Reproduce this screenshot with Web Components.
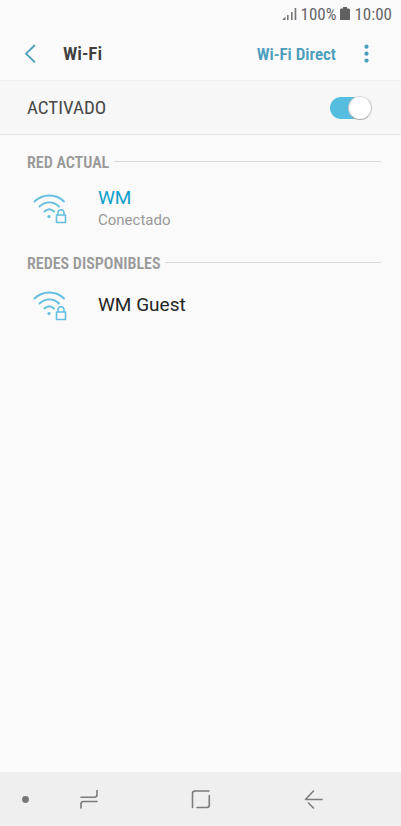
<!DOCTYPE html>
<html lang="es">
<head>
<meta charset="utf-8">
<meta name="viewport" content="width=device-width, initial-scale=1">
<title>Wi-Fi</title>
<style>
html, body { margin: 0; background: #fafafa; }
body { font-family: Roboto, "Liberation Sans", sans-serif; color: #252525;
  --condensed: "Roboto Condensed", Roboto, "Liberation Sans", sans-serif; --accent: #4a9dbd; }
</style>
</head>
<body>
<wifi-screen></wifi-screen>
<script>
function define(name, html) {
  const template = document.createElement('template');
  template.innerHTML = html;
  customElements.define(name, class extends HTMLElement {
    constructor() {
      super();
      this.attachShadow({ mode: 'open' }).append(template.content.cloneNode(true));
    }
  });
}

define('status-bar', `
<style>
:host { display: flex; justify-content: flex-end; align-items: center; height: 28px; padding: 0 9px; gap: 4px;
  font: 400 17px/20px var(--condensed); color: #666; }
svg { display: block; }
</style>
<svg width="15" height="14" viewBox="0 0 15 14" fill="#777" aria-hidden="true"><path d="M0 13l3.500-3.500v3.500zM5 8h1.600v5H5zM9 5h1.600v8H9zM12.600 1h1.700v12h-1.700z"/></svg>
<span>100%</span>
<svg width="10" height="14" viewBox="0 0 10 14" fill="#606060" aria-hidden="true"><path d="M3 0h4v1.500h1.600q1.400 0 1.400 1.400V13H0V2.900q0-1.400 1.400-1.400H3z"/></svg>
<time>10:00</time>`);

define('app-header', `
<style>
:host { display: flex; align-items: center; height: 52px; padding: 0 23px 0 18px; box-sizing: border-box; }
button { border: 0; padding: 0; background: none; font: 600 17px/24px var(--condensed); color: var(--accent); }
svg { display: block; }
h1 { flex: 1; margin: 0 0 0 21px; font: 600 19px/24px var(--condensed); color: #404040; }
.more { margin-left: 18px; }
</style>
<button aria-label="Atrás"><svg width="24" height="24" viewBox="0 0 24 24" fill="none" stroke="#4a9dbd" stroke-width="1.800"><path d="M17 3L8 11.700l9 8.700"/></svg></button>
<h1><slot></slot></h1>
<button>Wi-Fi Direct</button>
<button class="more" aria-label="Más opciones"><svg width="24" height="24" viewBox="0 0 24 24" fill="#4a9dbd"><circle cx="12.500" cy="4.700" r="2.100"/><circle cx="12.500" cy="11.700" r="2.100"/><circle cx="12.500" cy="18.600" r="2.100"/></svg></button>`);

define('switch-row', `
<style>
:host { display: block; background: #f7f7f7; border-top: 1px solid #f0f0f0; border-bottom: 1px solid #e4e4e4; }
label { display: flex; align-items: center; justify-content: space-between; height: 53px; padding: 0 29px 0 27px;
  font: 400 19px/24px var(--condensed); color: #484848; }
input { appearance: none; margin: 0; width: 42px; height: 24px; display: flex; align-items: center; }
input::before { content: ""; flex: 1; height: 22px; margin-right: -12px; background: #56bde0; border-radius: 11px 0 0 11px; }
input::after { content: ""; box-sizing: border-box; width: 24px; height: 24px; border-radius: 50%; background: #fff;
  border: 1px solid #c4c4c4; border-top-color: #d6d6d6; border-bottom-color: #aaa; }
</style>
<label><slot></slot><input type="checkbox" role="switch" checked></label>`);

define('section-title', `
<style>
:host { display: flex; align-items: center; gap: 5px; padding: 0 20px 0 27px; }
h2 { margin: 0; font: 600 16px/20px var(--condensed); color: #999; }
i { flex: 1; height: 1px; background: #d9d9d9; margin-bottom: 4px; }
</style>
<h2><slot></slot></h2><i></i>`);

define('wifi-network', `
<style>
:host { display: block; }
button { display: flex; align-items: center; width: 100%; border: 0; padding: 0 20px 0 31px; background: none; color: #252525; text-align: left; font: 400 19px/24px Roboto, "Liberation Sans", sans-serif; }
svg { display: block; margin-right: 29px; }
span { display: block; }
:host([current]) .name { color: #0d9fcd; }
::slotted([slot=state]) { display: block; font-size: 15px; line-height: 20px; color: #999; }
</style>
<button>
<svg width="38" height="36" viewBox="0 0 38 36" fill="none" stroke="#62bfe0" stroke-width="1.900" stroke-linecap="round" aria-hidden="true">
<path d="M3.500 11.500C12 3.500 25 3.500 33 11.500M8.500 16.500c6-5.500 14-5.500 19.500 0M13.500 21.500c3-2.800 6.500-2.800 9.500 0"/>
<circle cx="18" cy="26.500" r="1.600" fill="#62bfe0" stroke="none"/>
<path d="M25.500 25h9v7.500h-9zM27 25v-2.200a3 3 0 0 1 6 0v2.200" stroke-width="1.600" stroke-linejoin="round"/>
</svg>
<span><span class="name"><slot></slot></span><slot name="state"></slot></span>
</button>`);

define('nav-bar', `
<style>
:host { display: grid; grid-template-columns: 15px 1fr 1fr 1fr; align-items: center; height: 54px; padding: 0 32px 0 18px; background: #efefef; }
button { border: 0; padding: 0; background: none; display: flex; justify-content: center; }
svg { display: block; fill: none; stroke: #7c7c7c; stroke-width: 1.600; stroke-linecap: round; stroke-linejoin: round; }
</style>
<button aria-label="Mostrar u ocultar barra"><svg width="15" height="22" viewBox="0 0 15 22"><circle cx="7.500" cy="11.500" r="3.400" style="fill:#777;stroke:none"/></svg></button>
<button aria-label="Recientes"><svg width="22" height="22" viewBox="0 0 22 22"><path d="M3 9.300h13.500q2.500 0 2.500-2.500V2.500M19 13.500H5.500Q3 13.500 3 16v4"/></svg></button>
<button aria-label="Inicio"><svg width="22" height="22" viewBox="0 0 22 22"><path d="M19 3H5Q2.500 3 2.500 5.500V19.500M19.300 7.500V17Q19.300 19.500 16.800 19.500H7"/></svg></button>
<button aria-label="Volver"><svg width="22" height="22" viewBox="0 0 22 22"><path d="M20 11.500H3.500L11.500 3M6.500 15l5 5"/></svg></button>`);

define('wifi-screen', `
<style>
:host { display: flex; flex-direction: column; min-height: 100vh; }
main { flex: 1; }
section { padding-top: 18px; }
section + section { padding-top: 24px; }
wifi-network { margin-top: 13px; }
</style>
<status-bar></status-bar>
<app-header>Wi-Fi</app-header>
<main>
<switch-row>ACTIVADO</switch-row>
<section><section-title>RED ACTUAL</section-title><wifi-network current>WM<span slot="state">Conectado</span></wifi-network></section>
<section><section-title>REDES DISPONIBLES</section-title><wifi-network>WM Guest</wifi-network></section>
</main>
<nav-bar></nav-bar>`);
</script>
</body>
</html>
